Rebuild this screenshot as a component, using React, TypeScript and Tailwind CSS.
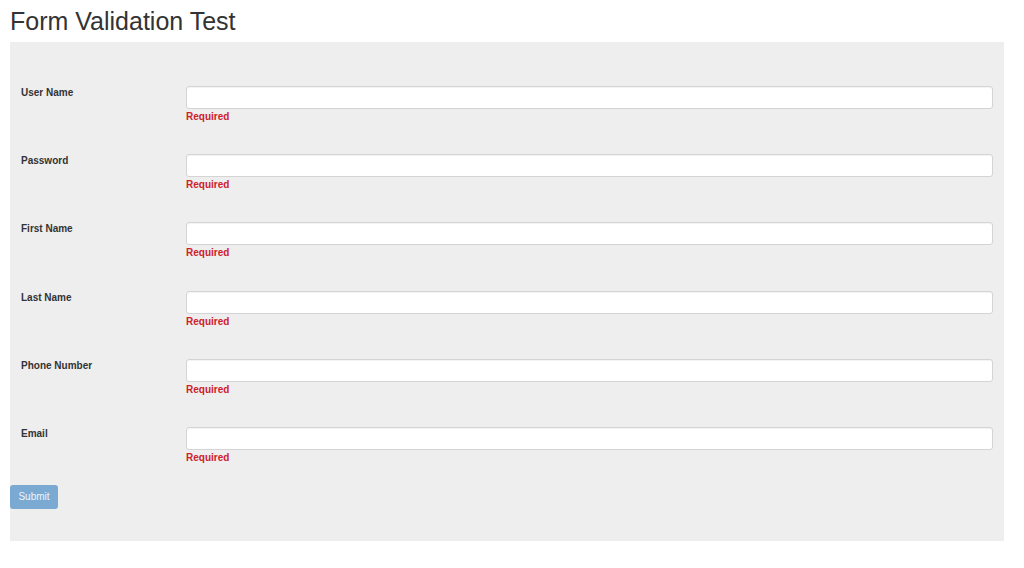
import React from "react";

const fields = ["User Name", "Password", "First Name", "Last Name", "Phone Number", "Email"];

export default function App() {
  return (
    <div className="min-h-[568px] bg-white text-[#333333]" style={{ fontFamily: '"Liberation Sans", Arial, sans-serif' }}>
      <h3 className="pl-[10px] pt-[8px] mb-[7px] text-[25px] leading-[27px] font-normal text-[#333333]">
        Form Validation Test
      </h3>
      <div className="ml-[10px] w-[994px] bg-[#eeeeee] pt-[44px] pb-[32px] pl-[11px] pr-[11px]">
        <div className="flex flex-col gap-[31.2px]">
          {fields.map((f) => (
            <div key={f} className="flex">
              <label className="w-[165px] shrink-0 pt-[1px] text-[10px] leading-[12px] font-bold text-[#333333]">
                {f}
              </label>
              <div className="flex-1 flex flex-col">
                <input
                  type="text"
                  className="h-[23px] w-full rounded-[3px] border border-[#d4d4d4] bg-white px-2 text-[10px] outline-none shadow-[inset_0_1px_1px_rgba(0,0,0,0.05)]"
                />
                <span className="mt-[2px] text-[10px] leading-[12px] font-bold text-[#d0202a]">Required</span>
              </div>
            </div>
          ))}
        </div>
        <button
          type="button"
          className="-ml-[11px] mt-[21px] h-[24px] w-[48px] rounded-[3px] bg-[#7aa9d2] text-[10px] leading-[12px] text-[#eef4fa]"
        >
          Submit
        </button>
      </div>
    </div>
  );
}
